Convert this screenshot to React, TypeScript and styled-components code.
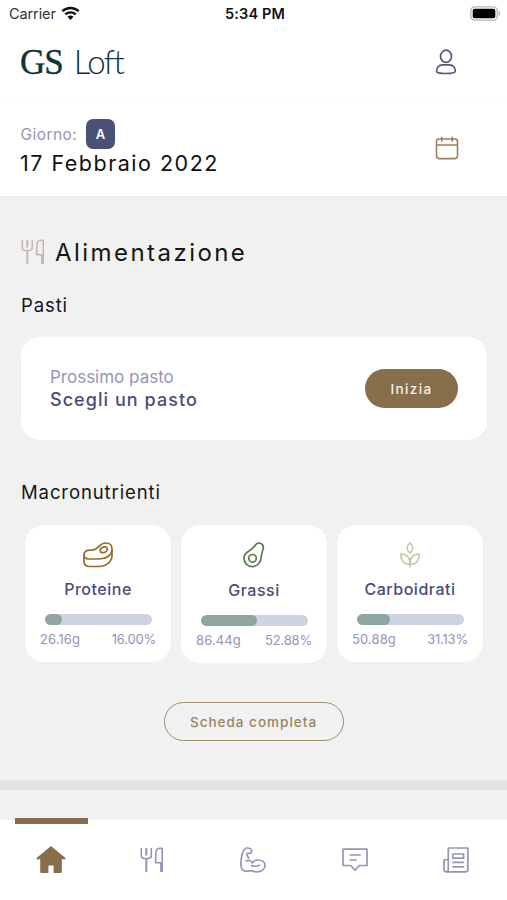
import React from "react";
import styled, { createGlobalStyle } from "styled-components";

const colors = {
  gold: "#866f4a",
  navy: "#494c78",
  lilac: "#9495b8",
  ink: "#161616",
  page: "#f1f1f1",
  track: "#cdd3e0",
  fill: "#8fa5a2",
  logo: "#0d3435",
};

const GlobalStyle = createGlobalStyle`
  *, *::before, *::after { box-sizing: border-box; }
  body { margin: 0; background: #fff; font-family: Inter, "Liberation Sans", sans-serif; }
  button { font-family: inherit; cursor: pointer; padding: 0; }
  h1, h2, h3, p { margin: 0; font-weight: 400; }
  svg { display: block; flex: none; }
`;

const Screen = styled.div`
  width: 507px;
  height: 900px;
  overflow: hidden;
  display: flex;
  flex-direction: column;
  background: #fff;
`;

const StatusBar = styled.div`
  height: 28px;
  flex: none;
  display: grid;
  grid-template-columns: 1fr auto 1fr;
  align-items: center;
  padding: 0 6px 2px 9px;
`;

const Carrier = styled.div`
  display: flex;
  align-items: center;
  gap: 5px;
  font-size: 14.5px;
  letter-spacing: -0.1px;
  color: #333;
`;

const Clock = styled.div`
  font-size: 14.5px;
  font-weight: 600;
  letter-spacing: 0.15px;
  color: #111;
`;

const BatterySlot = styled.div`
  justify-self: end;
`;

const Header = styled.header`
  height: 69px;
  flex: none;
  display: flex;
  align-items: center;
  justify-content: space-between;
  padding: 0 50px 0 20px;
  border-bottom: 1px solid #fdfdfd;
`;

const Logo = styled.div`
  display: flex;
  align-items: baseline;
  gap: 11px;
  height: 42px;
  line-height: 40px;
  color: ${colors.logo};
`;

const LogoSerif = styled.span`
  font-family: "Liberation Serif", serif;
  font-size: 35px;
  letter-spacing: -1px;
  -webkit-text-stroke: 0.4px ${colors.logo};
`;

const LogoSans = styled.span`
  font-family: Lato, sans-serif;
  font-weight: 300;
  font-size: 33px;
  letter-spacing: -1.6px;
`;

const DayBar = styled.section`
  height: 99px;
  flex: none;
  display: flex;
  align-items: center;
  justify-content: space-between;
  padding: 3px 48px 0 20px;
`;

const DayLabel = styled.div`
  display: flex;
  align-items: center;
  gap: 9px;
  height: 30px;
  padding-left: 0.5px;
  font-size: 15.5px;
  line-height: 20px;
  letter-spacing: 0.45px;
  color: ${colors.lilac};
`;

const DayWord = styled.span`
  padding-top: 2px;
`;

const DayBadge = styled.span`
  width: 29px;
  height: 30px;
  border-radius: 7px;
  display: grid;
  place-items: center;
  background: #4a5078;
  color: #fff;
  font-size: 13px;
  font-weight: 600;
`;

const DateText = styled.h1`
  font-size: 21.5px;
  line-height: 29px;
  letter-spacing: 1.5px;
  color: #111;
`;

const Main = styled.main`
  flex: 1;
  min-height: 0;
  background: ${colors.page};
  padding: 37px 20px 0;
  border-top: 1px solid #ebebeb;
`;

const SectionTitle = styled.h2`
  display: flex;
  align-items: center;
  gap: 10px;
  height: 36px;
  padding-left: 1px;
  font-size: 24px;
  letter-spacing: 2.45px;
  color: ${colors.ink};
`;

const SubTitle = styled.h3<{ $top: number }>`
  margin-top: ${(p) => p.$top}px;
  font-size: 18.5px;
  line-height: 26px;
  letter-spacing: 0.9px;
  padding-left: 1px;
  color: ${colors.ink};
`;

const MealCard = styled.div`
  margin: 19px 0 0 1px;
  height: 103px;
  border-radius: 19px;
  background: #fff;
  display: flex;
  align-items: center;
  justify-content: space-between;
  padding: 0 29px;
`;

const MealCaption = styled.p`
  font-size: 17px;
  line-height: 22px;
  color: ${colors.lilac};
`;

const MealName = styled.p`
  font-size: 18px;
  line-height: 23px;
  font-weight: 500;
  letter-spacing: 1.05px;
  color: ${colors.navy};
`;

const StartButton = styled.button`
  width: 93px;
  height: 39px;
  border: 0;
  border-radius: 20px;
  background: ${colors.gold};
  color: #f5f0e8;
  font-size: 13.5px;
  font-weight: 500;
  letter-spacing: 1.4px;
`;

const MacroRow = styled.div`
  display: grid;
  grid-template-columns: repeat(3, 146px);
  align-items: start;
  gap: 10px;
  margin: 20px 0 0 5px;
  height: 137px;
`;

const MacroCard = styled.div<{ $tall?: boolean }>`
  height: ${(p) => (p.$tall ? 138 : 137)}px;
  border-radius: 19px;
  background: #fff;
  padding: 17px 15px 0;
  display: flex;
  flex-direction: column;
  align-items: center;
`;

const MacroName = styled.p<{ $drop?: boolean }>`
  margin-top: ${(p) => (p.$drop ? 10 : 9)}px;
  font-size: 16px;
  line-height: 24px;
  font-weight: 500;
  letter-spacing: 0.5px;
  color: ${colors.navy};
`;

const Track = styled.div`
  margin-top: 13px;
  width: 107px;
  height: 11px;
  flex: none;
  border-radius: 6px;
  background: ${colors.track};
  overflow: hidden;
`;

const Fill = styled.div`
  height: 100%;
  border-radius: 6px;
  background: ${colors.fill};
`;

const MacroValues = styled.div`
  margin-top: 5px;
  width: 100%;
  display: flex;
  justify-content: space-between;
  font-size: 13px;
  line-height: 18px;
  letter-spacing: 0.1px;
  color: ${colors.lilac};
`;

const Percent = styled.span`
  letter-spacing: -0.2px;
`;

const FullButton = styled.button`
  display: block;
  margin: 40px auto 0;
  width: 180px;
  height: 39px;
  border: 1.5px solid #a08e6c;
  border-radius: 20px;
  background: transparent;
  color: #98845f;
  font-size: 13.5px;
  font-weight: 500;
  letter-spacing: 1px;
`;

const Divider = styled.div`
  margin: 39px -20px 0;
  height: 10px;
  background: #e1e2e7;
`;

const TabBar = styled.nav`
  height: 80px;
  flex: none;
  display: grid;
  grid-template-columns: repeat(5, 1fr);
  background: #fff;
`;

const Tab = styled.button<{ $active?: boolean }>`
  position: relative;
  border: 0;
  background: transparent;
  display: grid;
  place-items: center;
  color: ${(p) => (p.$active ? colors.gold : colors.lilac)};
  &::before {
    content: "";
    display: ${(p) => (p.$active ? "block" : "none")};
    position: absolute;
    top: -2px;
    left: 15px;
    width: 73px;
    height: 6px;
    background: ${colors.gold};
  }
`;

const WifiIcon = () => (
  <svg width="19" height="15" viewBox="0 0 19 15" fill="none" stroke="#111">
    <path d="M1.3 5.2C6 .9 13 .9 17.7 5.2" strokeWidth="2.5" />
    <path d="M4.3 8.4c3-2.7 7.4-2.7 10.4 0" strokeWidth="2.3" />
    <path d="M6.5 10.7c1.7-1.5 4.3-1.5 6 0L9.5 14z" fill="#111" stroke="none" />
  </svg>
);

const BatteryIcon = () => (
  <svg width="31" height="15" viewBox="0 0 31 15">
    <rect x=".8" y=".8" width="26.4" height="13.4" rx="4" fill="#fff" stroke="#b5b5b5" strokeWidth="1.3" />
    <rect x="2.7" y="2.7" width="22.6" height="9.6" rx="2" fill="#000" />
    <path d="M28.6 5.2c2 .6 2 4 0 4.6z" fill="#aaa" />
  </svg>
);

const UserIcon = () => (
  <svg width="22" height="26" viewBox="0 0 22 26" fill="none" stroke="#555783" strokeWidth="1.7">
    <ellipse cx="11" cy="7.3" rx="5.5" ry="6.1" />
    <path d="M7.5 15.8h7c3.6 0 5.9 3.2 5.9 6.2 0 1.8-2 2.5-9.4 2.5S1.6 23.8 1.6 22c0-3 2.3-6.2 5.9-6.2z" />
  </svg>
);

const CalendarIcon = () => (
  <svg width="24" height="24" viewBox="0 0 24 24" fill="none" stroke="#98815a" strokeWidth="1.6">
    <rect x="1.5" y="3" width="21" height="19.6" rx="2.5" />
    <path d="M1.5 9h21M6.7 .7v5M17.3 .7v5" />
  </svg>
);

const CutleryIcon = ({ color = "currentColor" }: { color?: string }) => (
  <svg width="24" height="26" viewBox="0 0 24 26" fill="none" stroke={color} strokeWidth="1.6" strokeLinejoin="round">
    <path d="M1.3 1v7.5q0 3 3 3h4q3 0 3-3V1" />
    <path d="M6.3 1v7.5M6.3 11.5V25" strokeWidth="2" />
    <path d="M22.2 25V1.2h-2.3c-2.8 0-4.2 2.5-4.2 6.3v8.2h5.5M20.9 15.7V25" />
  </svg>
);

const SteakIcon = () => (
  <svg width="30" height="26" viewBox="0 0 30 26" fill="none" stroke="#966c2c" strokeWidth="1.7" strokeLinejoin="round">
    <path d="M1 13.2c0-3.200 2.500-5 6.200-5 4.500 0 6.300-1.200 8.800-3.900C18.300 1.800 20.500 1 23 1c3.700 0 6 2.500 6 6 0 6.500-6 10-13 10H5.500C2.600 17 1 15.500 1 13.200z" />
    <path d="M1 13.200v6.300C1 23 3 24.500 7 24.500h8.500c7.500 0 13.500-4.500 13.500-11V7" />
    <path d="M17.600 9.900c-1.300-1.400-.1-3.600 1.700-4.500 2-1 4.300-.7 4.900.9.600 1.800-.9 3.700-2.800 4.100-1.500.3-2.900.5-3.800-.5z" />
  </svg>
);

const AvocadoIcon = () => (
  <svg width="22" height="26" viewBox="0 0 22 26" fill="none" stroke="#597d4e" strokeWidth="1.7">
    <path d="M12.2 3.2C13.2 1.5 15 .8 17 1.3c2.7.7 3.7 2.7 3.2 5.1-.6 3.2-1.7 4.7-1.900 8-.2 5.500-3.600 10.200-8.800 10.200-5 0-8.500-3.700-8.500-8.600 0-3.600 2.200-5.300 4.700-6.700 3-1.700 4.500-3.200 6.500-6.100z" />
    <circle cx="9.5" cy="16.3" r="3.8" />
  </svg>
);

const WheatIcon = () => (
  <svg width="20" height="26" viewBox="0 0 20 26" fill="none" stroke="#c4c8a2" strokeWidth="1.5" strokeLinejoin="round">
    <path d="M10 .9C6.2 4.5 6.2 7.500 10 11.200c3.800-3.700 3.800-6.700 0-10.300zM10 25.500V16" />
    <path d="M10 22.300C4 22.800.8 19 .8 12c5.500 0 9.200 3.500 9.200 10.300zM10 22.300c6 .5 9.200-3.300 9.200-10.300-5.500 0-9.200 3.500-9.200 10.300z" />
  </svg>
);

const HomeIcon = () => (
  <svg width="30" height="28" viewBox="0 0 30 28" fill="currentColor">
    <path d="M15 0 .3 12.2l1.500 1.500 2.400-1v13.100q0 1.200 1.200 1.200h7v-7.500h5.200V27h7q1.200 0 1.200-1.200V12.700l2.400 1 1.500-1.500z" />
  </svg>
);

const MuscleIcon = () => (
  <svg width="26" height="26" viewBox="0 0 26 26" fill="none" stroke="currentColor" strokeWidth="1.7" strokeLinecap="round" strokeLinejoin="round">
    <path d="M8.700 11c-.8-1.400-1.800-2.200-1.800-3.700 0-1 1.200-1.500 2-1 1.500.8 3.200-.8 2.700-2.500C11.200 1.800 9.500.9 7 1 4.500 1.100 3 4 2 8c-1 4.200-1.500 9.500-.5 13 .7 2.200 2.500 3.200 5 3.200 1.700 0 2.700-.5 4-.5 1.700 0 3 1.100 6 1.100 5 0 8.500-2.500 8.500-6.300 0-3.300-2.800-5.500-6.700-5.500-2.800 0-5 1-6 3M12.300 16c-.8-2.400-3.800-3.500-6-2M11.500 18.500c2.500.8 5 1.700 8-.4" />
  </svg>
);

const MessageIcon = () => (
  <svg width="26" height="24" viewBox="0 0 26 24" fill="none" stroke="currentColor" strokeWidth="1.7" strokeLinejoin="round">
    <path d="M1 1.200h24v16.300h-7.700L13 22.300l-4.300-4.800H1zM7.500 7h11.300M7.500 12h7.300" />
  </svg>
);

const NewsIcon = () => (
  <svg width="26" height="26" viewBox="0 0 26 26" fill="none" stroke="currentColor" strokeWidth="1.7" strokeLinejoin="round">
    <path d="M5.300 1h19.600v21.500q0 2.300-2.300 2.300H3.200Q1 24.800 1 22.500V13q1.700-1 4.300 0M5.300 1v21.500q0 2.300-2.200 2.300" />
    <path d="M9.800 7h10.800v4.200H9.800zM9.300 15.300h11.800M9.300 19.800h11.800" />
  </svg>
);

interface Macro {
  name: string;
  grams: string;
  percent: number;
  icon: React.ReactNode;
  tall?: boolean;
}

const macros: Macro[] = [
  { name: "Proteine", grams: "26.16g", percent: 16, icon: <SteakIcon /> },
  { name: "Grassi", grams: "86.44g", percent: 52.88, icon: <AvocadoIcon />, tall: true },
  { name: "Carboidrati", grams: "50.88g", percent: 31.13, icon: <WheatIcon /> },
];

export default function App() {
  return (
    <Screen>
      <GlobalStyle />
      <StatusBar>
        <Carrier>Carrier <WifiIcon /></Carrier>
        <Clock>5:34 PM</Clock>
        <BatterySlot><BatteryIcon /></BatterySlot>
      </StatusBar>
      <Header>
        <Logo><LogoSerif>GS</LogoSerif><LogoSans>Loft</LogoSans></Logo>
        <UserIcon />
      </Header>
      <DayBar>
        <div>
          <DayLabel><DayWord>Giorno:</DayWord> <DayBadge>A</DayBadge></DayLabel>
          <DateText>17 Febbraio 2022</DateText>
        </div>
        <CalendarIcon />
      </DayBar>
      <Main>
        <SectionTitle><CutleryIcon color="#c6b9ac" />Alimentazione</SectionTitle>
        <SubTitle $top={22}>Pasti</SubTitle>
        <MealCard>
          <div>
            <MealCaption>Prossimo pasto</MealCaption>
            <MealName>Scegli un pasto</MealName>
          </div>
          <StartButton>Inizia</StartButton>
        </MealCard>
        <SubTitle $top={39}>Macronutrienti</SubTitle>
        <MacroRow>
          {macros.map((m) => (
            <MacroCard key={m.name} $tall={m.tall}>
              {m.icon}
              <MacroName $drop={m.tall}>{m.name}</MacroName>
              <Track><Fill style={{ width: `${m.percent}%` }} /></Track>
              <MacroValues>
                <span>{m.grams}</span>
                <Percent>{m.percent.toFixed(2)}%</Percent>
              </MacroValues>
            </MacroCard>
          ))}
        </MacroRow>
        <FullButton>Scheda completa</FullButton>
        <Divider />
      </Main>
      <TabBar>
        <Tab $active aria-label="Home"><HomeIcon /></Tab>
        <Tab aria-label="Pasti"><CutleryIcon /></Tab>
        <Tab aria-label="Allenamento"><MuscleIcon /></Tab>
        <Tab aria-label="Messaggi"><MessageIcon /></Tab>
        <Tab aria-label="Notizie"><NewsIcon /></Tab>
      </TabBar>
    </Screen>
  );
}
